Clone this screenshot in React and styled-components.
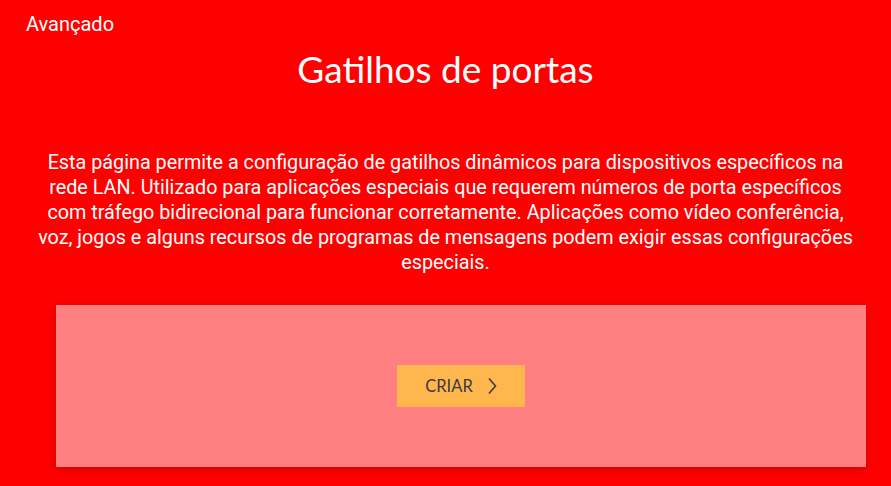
import React from 'react'
import styled, { createGlobalStyle } from 'styled-components';

const GlobalStyle = createGlobalStyle`
    html, body {
        margin: 0;
        padding: 0;
        background: #ff0000;
    }
    body {
        font-family: Roboto, "Liberation Sans", sans-serif;
        color: white;
    }
`

const Page = styled.div`
    width: 891px;
    height: 486px;
    background: #ff0000;
    overflow: hidden;
    display: flex;
    flex-direction: column;
`

const Crumb = styled.div`
    font-size: 20px;
    line-height: 24px;
    padding: 12px 0 0 26px;
    height: 24px;
`

const Title = styled.h1`
    margin: 11px 0 0;
    font-family: Lato, "Open Sans", sans-serif;
    font-weight: 400;
    font-size: 37px;
    line-height: 44px;
    text-align: center;
`

const Description = styled.p`
    margin: 59px auto 0;
    width: 830px;
    font-size: 19.8px;
    line-height: 25px;
    text-align: center;
`

const Card = styled.div`
    margin: 30px 25px 0 56px;
    height: 162px;
    background: #ff8080;
    box-shadow: 0 2px 10px rgba(120, 0, 0, 0.35);
    display: flex;
    align-items: center;
    justify-content: center;
`

const ActionButton = styled.button`
    width: 128px;
    height: 42px;
    border: none;
    background: ${props => props.color || '#ffb74d'};
    color: #3a3a3a;
    font-family: Lato, "Open Sans", sans-serif;
    font-size: 16.5px;
    display: flex;
    align-items: center;
    justify-content: center;
    gap: 14px;
    cursor: pointer;
    padding: 0;
`

const Chevron = () => (
    <svg width="10" height="18" viewBox="0 0 10 18" fill="none">
        <path d="M2 1.5 L8.5 9 L2 16.5" stroke="#3a3a3a" strokeWidth="1.6" />
    </svg>
)

const App = () => {
    return (
        <Page>
            <GlobalStyle />
            <Crumb>Avançado</Crumb>
            <Title>Gatilhos de portas</Title>
            <Description>
                Esta página permite a configuração de gatilhos dinâmicos para dispositivos específicos na rede LAN. Utilizado para aplicações especiais que requerem números de porta específicos com tráfego bidirecional para funcionar corretamente. Aplicações como vídeo conferência, voz, jogos e alguns recursos de programas de mensagens podem exigir essas configurações especiais.
            </Description>
            <Card>
                <ActionButton>
                    CRIAR
                    <Chevron />
                </ActionButton>
            </Card>
        </Page>
    )
}

export default App
